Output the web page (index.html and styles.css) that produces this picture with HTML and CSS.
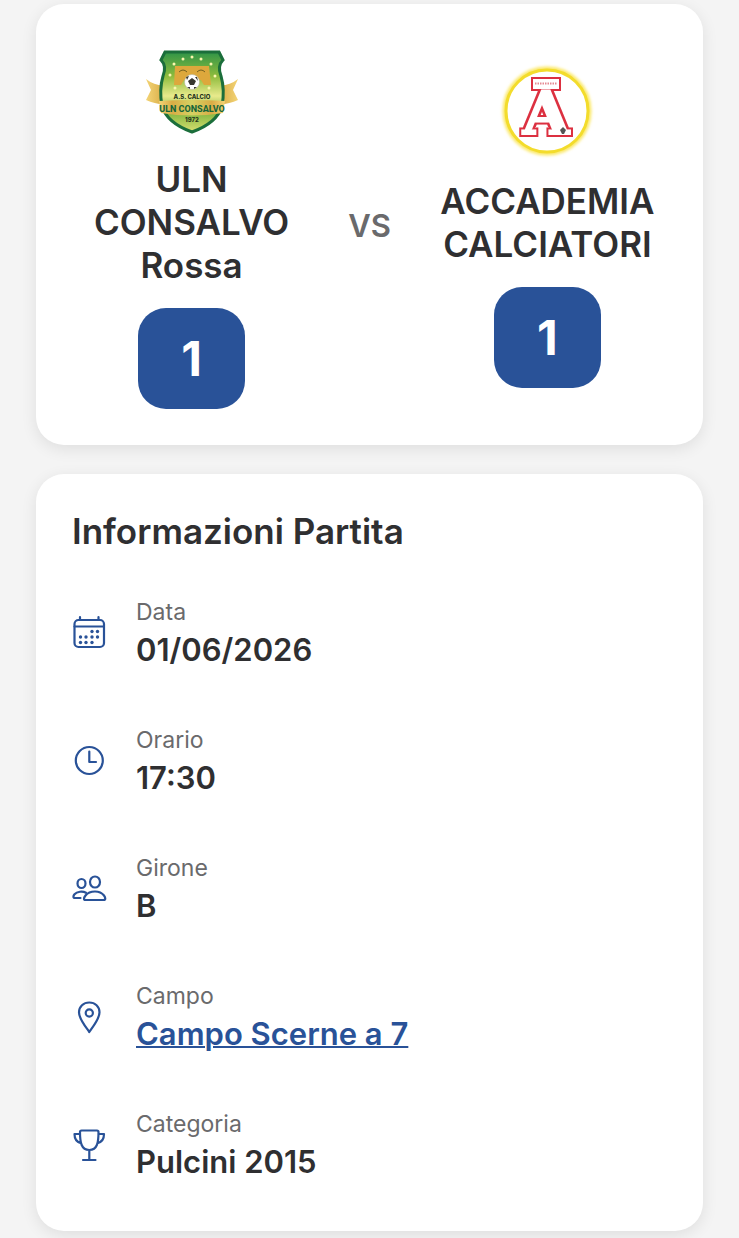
FILE: index.html
```html
<!DOCTYPE html>
<html lang="it">
<head>
<meta charset="utf-8">
<meta name="viewport" content="width=device-width, initial-scale=1">
<title>Partita</title>
<link rel="stylesheet" href="styles.css">
</head>
<body>
<main class="page">
  <section class="card match">
    <div class="team">
      <svg class="team-logo" viewBox="0 2 108 108" role="img" aria-label="ULN Consalvo">
        <defs>
          <linearGradient id="shield" x1="0" y1="0" x2="0" y2="1">
            <stop offset="0" stop-color="#2f9448"/>
            <stop offset=".3" stop-color="#8dbb3c"/>
            <stop offset=".55" stop-color="#e8ea8c"/>
            <stop offset=".75" stop-color="#7fb53e"/>
            <stop offset="1" stop-color="#d9df70"/>
          </linearGradient>
          <linearGradient id="ribbon" x1="0" y1="0" x2="1" y2="0">
            <stop offset="0" stop-color="#f3d477"/>
            <stop offset=".2" stop-color="#d9ac45"/>
            <stop offset=".5" stop-color="#d5d263"/>
            <stop offset=".8" stop-color="#d9ac45"/>
            <stop offset="1" stop-color="#f3d477"/>
          </linearGradient>
        </defs>
        <path d="M8 41 Q18 49 30 47 L30 66 Q18 67 8 62 L13 52Z M100 41 Q90 49 78 47 L78 66 Q90 67 100 62 L95 52Z" fill="url(#ribbon)"/>
        <path d="M27 14 H81 L85 22 Q79 28 83 38 Q87 52 84 68 Q79 85 54 94 Q29 85 24 68 Q21 52 25 38 Q29 28 23 22Z" fill="url(#shield)" stroke="#1b6e3b" stroke-width="3"/>
        <path d="M37 28 H71 L73 47 H66 L63 42 H46 L43 47 H36Z" fill="#dda83c"/>
        <path d="M41 34 q4 -4 8 0 M59 34 q4 -4 8 0" fill="none" stroke="#75611f" stroke-width="1"/>
        <g fill="#fbf6ae"><circle cx="54" cy="19" r="1.5"/><circle cx="45" cy="21" r="1.5"/><circle cx="63" cy="21" r="1.5"/><circle cx="36" cy="26" r="1.5"/><circle cx="73" cy="26" r="1.5"/><circle cx="32" cy="37" r="1.5"/><circle cx="77" cy="38" r="1.5"/><circle cx="37" cy="50" r="1.5"/><circle cx="71" cy="50" r="1.5"/></g>
        <circle cx="54" cy="44" r="7.5" fill="#fff" stroke="#b9b9a0" stroke-width=".6"/>
        <path d="M54 40 l4 3 -2 4 h-4 l-2 -4Z M48 39 l3 -1 -2 4Z M59 39 l1 4 -3 -4Z M49 49 l3 0 0 2Z M59 49 l-3 0 0 2Z" fill="#37372f"/>
        <path d="M21 63 Q54 61 87 63 L85 75 Q54 80 23 75Z" fill="url(#ribbon)"/>
        <text x="54" y="61" class="crest-small">A.S. CALCIO</text>
        <text x="54" y="74" class="crest-name">ULN CONSALVO</text>
        <text x="54" y="84" class="crest-small">1972</text>
      </svg>
      <h2 class="team-name">ULN CONSALVO Rossa</h2>
      <div class="score">1</div>
    </div>
    <div class="versus">VS</div>
    <div class="team">
      <svg class="team-logo" viewBox="0 2 108 108" role="img" aria-label="Accademia Calciatori">
        <defs>
          <filter id="glow" x="-20%" y="-20%" width="140%" height="140%"><feGaussianBlur stdDeviation="1.6"/></filter>
          <filter id="outline" x="-20%" y="-20%" width="140%" height="140%" color-interpolation-filters="sRGB">
            <feMorphology in="SourceGraphic" operator="dilate" radius="1" result="inner"/>
            <feMorphology in="SourceAlpha" operator="dilate" radius="3" result="outer"/>
            <feFlood flood-color="#dc3040"/>
            <feComposite in2="outer" operator="in" result="edge"/>
            <feMerge><feMergeNode in="edge"/><feMergeNode in="inner"/></feMerge>
          </filter>
        </defs>
        <circle cx="54" cy="51" r="42" fill="none" stroke="#fbe866" stroke-width="5" filter="url(#glow)"/>
        <circle cx="54" cy="51" r="41" fill="#fff" stroke="#f3dc2c" stroke-width="3"/>
        <g filter="url(#outline)" fill="#fff"><text x="53" y="74" class="emblem">A</text><rect x="41" y="20" width="24" height="8"/></g>
        <path d="M42 23.500H64" stroke="#e58a92" stroke-width="2" stroke-dasharray="1.500 1"/>
        <path d="M70 67 l3 3 -2 4 h-2 l-2 -4Z" fill="#555"/>
      </svg>
      <h2 class="team-name">ACCADEMIA CALCIATORI</h2>
      <div class="score">1</div>
    </div>
  </section>

  <section class="card">
    <h1 class="title">Informazioni Partita</h1>
    <dl class="info">
      <div class="row">
        <svg class="icon" viewBox="0 0 36 36" aria-hidden="true">
          <rect x="2.500" y="5" width="29.500" height="27" rx="4"/><path d="M2.500 11.500H32M8 2v3M26.500 2v3"/>
          <g class="dots"><circle cx="20" cy="16.500" r="1.700"/><circle cx="25.500" cy="16.500" r="1.700"/><circle cx="8.500" cy="22" r="1.700"/><circle cx="14" cy="22" r="1.700"/><circle cx="20" cy="22" r="1.700"/><circle cx="25.500" cy="22" r="1.700"/><circle cx="8.500" cy="27.500" r="1.700"/><circle cx="14" cy="27.500" r="1.700"/><circle cx="20" cy="27.500" r="1.700"/></g>
        </svg>
        <div class="text"><dt>Data</dt><dd>01/06/2026</dd></div>
      </div>
      <div class="row">
        <svg class="icon" viewBox="0 0 36 36" aria-hidden="true"><circle cx="17.300" cy="17.500" r="13.500"/><path d="M17.300 8.500v10.500h6.700"/></svg>
        <div class="text"><dt>Orario</dt><dd>17:30</dd></div>
      </div>
      <div class="row">
        <svg class="icon" viewBox="0 0 36 36" aria-hidden="true">
          <ellipse cx="23" cy="11" rx="5" ry="5.500"/><ellipse cx="9.500" cy="12.500" rx="4" ry="4.500"/>
          <path d="M13.500 29H31.500C34 29 33.500 26.500 32 24.500C30 22 26.500 20.500 23 20.500S15.500 22 13.500 24.500C11.500 27 11.500 29 13.500 29Z"/>
          <path d="M8.500 27H3C.8 27 1.200 24.800 2.500 23.300C5 20.500 10.500 19.800 14 21.800"/>
        </svg>
        <div class="text"><dt>Girone</dt><dd>B</dd></div>
      </div>
      <div class="row">
        <svg class="icon" viewBox="0 0 36 36" aria-hidden="true"><path d="M17.300 33C13.500 27.500 7 20 7 13.300C7 7.500 11.500 3.500 17.300 3.500S27.500 7.500 27.500 13.300C27.500 20 21 27.500 17.300 33Z"/><circle cx="17.300" cy="14" r="3.600"/></svg>
        <div class="text"><dt>Campo</dt><dd><a href="#campo">Campo Scerne a 7</a></dd></div>
      </div>
      <div class="row">
        <svg class="icon" viewBox="0 0 36 36" aria-hidden="true"><path d="M9.500 3.500H25Q26.500 3.500 26.500 5C26.500 15 25.500 23 17.300 23S8 15 8 5Q8 3.500 9.500 3.500ZM17.300 23V33M11 33H23.500M8 7H2.500C2.500 11.500 4 15 9 16.200M26.500 7H32C32 11.500 30.500 15 25.500 16.200"/></svg>
        <div class="text"><dt>Categoria</dt><dd>Pulcini 2015</dd></div>
      </div>
    </dl>
  </section>
</main>
</body>
</html>
```
FILE: styles.css
```css
* { box-sizing: border-box; }

body {
  margin: 0;
  background: #f4f4f4;
  color: #2f2f31;
  font-family: Inter, "Liberation Sans", sans-serif;
}

.page {
  display: flex;
  flex-direction: column;
  gap: 29px;
  padding: 4px 36px 7px;
}

.card {
  padding: 36px;
  background: #fff;
  border-radius: 28px;
  box-shadow: 0 4px 16px rgba(0, 0, 0, 0.09);
}

.match {
  display: flex;
  align-items: center;
}

.team {
  display: flex;
  flex: 1 1 0;
  flex-direction: column;
  align-items: center;
}

.team-logo {
  width: 108px;
  height: 108px;
}

.team-name {
  margin: 10px 0 21px;
  font-size: 35px;
  font-weight: 600;
  line-height: 43px;
  text-align: center;
}

.score {
  min-width: 107px;
  padding: 21px 36px;
  border-radius: 28px;
  background: #295298;
  color: #fff;
  font-size: 48px;
  font-weight: 700;
  line-height: 59px;
  text-align: center;
}

.versus {
  padding: 2px 37px 0;
  color: #6a6a6c;
  font-size: 31px;
  font-weight: 600;
  line-height: 38px;
}

.title {
  margin: 0 0 30px;
  font-size: 35px;
  font-weight: 600;
  line-height: 43px;
}

.info {
  display: flex;
  flex-direction: column;
  gap: 28px;
  margin: 0;
}

.row {
  display: flex;
  align-items: center;
  gap: 28px;
  padding: 14px 0;
}

.icon {
  flex: none;
  width: 36px;
  height: 36px;
  fill: none;
  stroke: #295298;
  stroke-width: 2.2;
  stroke-linecap: round;
  stroke-linejoin: round;
}

.dots {
  fill: #295298;
  stroke: none;
}

.text {
  display: flex;
  flex-direction: column;
  gap: 4px;
}

dt {
  color: #6a6a6c;
  font-size: 23px;
  line-height: 30px;
}

dd {
  margin: 0;
  font-size: 31px;
  font-weight: 600;
  line-height: 38px;
}

a {
  color: #295298;
  text-decoration-thickness: 2px;
}

.crest-small {
  fill: #26351c;
  font-size: 6px;
  font-weight: 800;
  text-anchor: middle;
}

.crest-name {
  fill: #17663a;
  font-family: "Liberation Sans Narrow", Roboto, sans-serif;
  font-size: 9px;
  font-weight: 800;
  text-anchor: middle;
}

.emblem {
  font-family: "DejaVu Serif", serif;
  font-size: 60px;
  font-weight: 700;
  text-anchor: middle;
}
```
